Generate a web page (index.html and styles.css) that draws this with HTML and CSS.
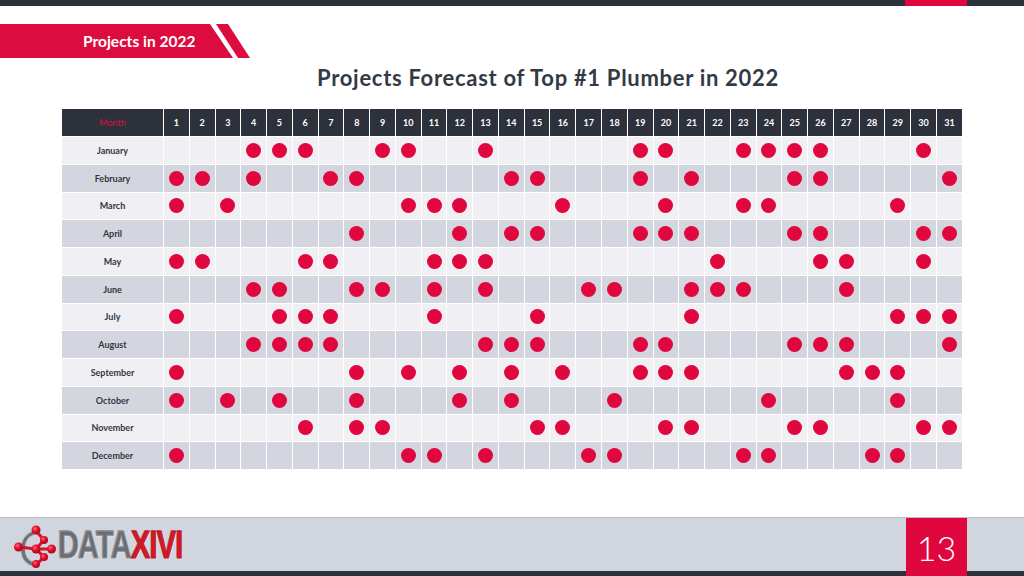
FILE: index.html
```html
<!DOCTYPE html>
<html lang="en">
<head>
<meta charset="utf-8">
<title>Projects in 2022</title>
<link rel="stylesheet" href="styles.css">
</head>
<body>
<div class="topbar"><div class="topbar-accent"></div></div>
<main class="main">
  <div class="banner">
    <div class="banner-main">Projects in 2022</div>
    <div class="banner-stripe"></div>
  </div>
  <h1 class="title">Projects Forecast of Top #1 Plumber in 2022</h1>
  <table class="grid">
    <thead>
      <tr><th class="month-h">Month</th><th>1</th><th>2</th><th>3</th><th>4</th><th>5</th><th>6</th><th>7</th><th>8</th><th>9</th><th>10</th><th>11</th><th>12</th><th>13</th><th>14</th><th>15</th><th>16</th><th>17</th><th>18</th><th>19</th><th>20</th><th>21</th><th>22</th><th>23</th><th>24</th><th>25</th><th>26</th><th>27</th><th>28</th><th>29</th><th>30</th><th>31</th></tr>
    </thead>
    <tbody>
      <tr><th>January</th><td></td><td></td><td></td><td class="d"></td><td class="d"></td><td class="d"></td><td></td><td></td><td class="d"></td><td class="d"></td><td></td><td></td><td class="d"></td><td></td><td></td><td></td><td></td><td></td><td class="d"></td><td class="d"></td><td></td><td></td><td class="d"></td><td class="d"></td><td class="d"></td><td class="d"></td><td></td><td></td><td></td><td class="d"></td><td></td></tr>
      <tr><th>February</th><td class="d"></td><td class="d"></td><td></td><td class="d"></td><td></td><td></td><td class="d"></td><td class="d"></td><td></td><td></td><td></td><td></td><td></td><td class="d"></td><td class="d"></td><td></td><td></td><td></td><td class="d"></td><td></td><td class="d"></td><td></td><td></td><td></td><td class="d"></td><td class="d"></td><td></td><td></td><td></td><td></td><td class="d"></td></tr>
      <tr><th>March</th><td class="d"></td><td></td><td class="d"></td><td></td><td></td><td></td><td></td><td></td><td></td><td class="d"></td><td class="d"></td><td class="d"></td><td></td><td></td><td></td><td class="d"></td><td></td><td></td><td></td><td class="d"></td><td></td><td></td><td class="d"></td><td class="d"></td><td></td><td></td><td></td><td></td><td class="d"></td><td></td><td></td></tr>
      <tr><th>April</th><td></td><td></td><td></td><td></td><td></td><td></td><td></td><td class="d"></td><td></td><td></td><td></td><td class="d"></td><td></td><td class="d"></td><td class="d"></td><td></td><td></td><td></td><td class="d"></td><td class="d"></td><td class="d"></td><td></td><td></td><td></td><td class="d"></td><td class="d"></td><td></td><td></td><td></td><td class="d"></td><td class="d"></td></tr>
      <tr><th>May</th><td class="d"></td><td class="d"></td><td></td><td></td><td></td><td class="d"></td><td class="d"></td><td></td><td></td><td></td><td class="d"></td><td class="d"></td><td class="d"></td><td></td><td></td><td></td><td></td><td></td><td></td><td></td><td></td><td class="d"></td><td></td><td></td><td></td><td class="d"></td><td class="d"></td><td></td><td></td><td class="d"></td><td></td></tr>
      <tr><th>June</th><td></td><td></td><td></td><td class="d"></td><td class="d"></td><td></td><td></td><td class="d"></td><td class="d"></td><td></td><td class="d"></td><td></td><td class="d"></td><td></td><td></td><td></td><td class="d"></td><td class="d"></td><td></td><td></td><td class="d"></td><td class="d"></td><td class="d"></td><td></td><td></td><td></td><td class="d"></td><td></td><td></td><td></td><td></td></tr>
      <tr><th>July</th><td class="d"></td><td></td><td></td><td></td><td class="d"></td><td class="d"></td><td class="d"></td><td></td><td></td><td></td><td class="d"></td><td></td><td></td><td></td><td class="d"></td><td></td><td></td><td></td><td></td><td></td><td class="d"></td><td></td><td></td><td></td><td></td><td></td><td></td><td></td><td class="d"></td><td class="d"></td><td class="d"></td></tr>
      <tr><th>August</th><td></td><td></td><td></td><td class="d"></td><td class="d"></td><td class="d"></td><td class="d"></td><td></td><td></td><td></td><td></td><td></td><td class="d"></td><td class="d"></td><td class="d"></td><td></td><td></td><td></td><td class="d"></td><td class="d"></td><td></td><td></td><td></td><td></td><td class="d"></td><td class="d"></td><td class="d"></td><td></td><td></td><td></td><td class="d"></td></tr>
      <tr><th>September</th><td class="d"></td><td></td><td></td><td></td><td></td><td></td><td></td><td class="d"></td><td></td><td class="d"></td><td></td><td class="d"></td><td></td><td class="d"></td><td></td><td class="d"></td><td></td><td></td><td class="d"></td><td class="d"></td><td class="d"></td><td></td><td></td><td></td><td></td><td></td><td class="d"></td><td class="d"></td><td class="d"></td><td></td><td></td></tr>
      <tr><th>October</th><td class="d"></td><td></td><td class="d"></td><td></td><td class="d"></td><td></td><td></td><td class="d"></td><td></td><td></td><td></td><td class="d"></td><td></td><td class="d"></td><td></td><td></td><td></td><td class="d"></td><td></td><td></td><td></td><td></td><td></td><td class="d"></td><td></td><td></td><td></td><td></td><td class="d"></td><td></td><td></td></tr>
      <tr><th>November</th><td></td><td></td><td></td><td></td><td></td><td class="d"></td><td></td><td class="d"></td><td class="d"></td><td></td><td></td><td></td><td></td><td></td><td class="d"></td><td class="d"></td><td></td><td></td><td></td><td class="d"></td><td class="d"></td><td></td><td></td><td></td><td class="d"></td><td class="d"></td><td></td><td></td><td></td><td class="d"></td><td class="d"></td></tr>
      <tr><th>December</th><td class="d"></td><td></td><td></td><td></td><td></td><td></td><td></td><td></td><td></td><td class="d"></td><td class="d"></td><td></td><td class="d"></td><td></td><td></td><td></td><td class="d"></td><td class="d"></td><td></td><td></td><td></td><td></td><td class="d"></td><td class="d"></td><td></td><td></td><td></td><td class="d"></td><td class="d"></td><td></td><td></td></tr>
    </tbody>
  </table>
</main>
<footer class="footer">
  <div class="logo">
    <svg class="logo-mark" width="44" height="46" viewBox="0 0 44 46" aria-hidden="true">
      <defs>
        <radialGradient id="ball" cx="0.38" cy="0.35" r="0.7">
          <stop offset="0" stop-color="#ff6a7a"/>
          <stop offset="0.45" stop-color="#e3102c"/>
          <stop offset="1" stop-color="#a3081c"/>
        </radialGradient>
      </defs>
      <path d="M21 11 Q11 15 11 27 Q11 39 21 42" fill="none" stroke="#c9ccd1" stroke-width="6" stroke-linecap="round"/>
      <path d="M21 11 Q11 15 11 27 Q11 39 21 42" fill="none" stroke="#6f7276" stroke-width="3.5" stroke-linecap="round"/>
      <g stroke="#d4142c" stroke-width="3" stroke-linecap="round" fill="none">
        <path d="M24 9 L32 18 L24 27 L32 35 L24 43"/>
        <path d="M7 25 L24 27 L40 27"/>
      </g>
      <g fill="url(#ball)">
        <circle cx="24" cy="8" r="4.5"/>
        <circle cx="32" cy="18" r="4"/>
        <circle cx="6.5" cy="25" r="4.5"/>
        <circle cx="24" cy="27" r="4.5"/>
        <circle cx="39.5" cy="27" r="4.5"/>
        <circle cx="32" cy="35" r="4"/>
        <circle cx="24" cy="42" r="4"/>
      </g>
    </svg>
    <div class="logo-text"><span class="logo-data">DATA</span><span class="logo-xivi">XIVI</span></div>
  </div>
  <div class="page-num">13</div>
</footer>
</body>
</html>
```
FILE: styles.css
```css
html, body {
  margin: 0;
  padding: 0;
}

body {
  width: 1024px;
  height: 576px;
  overflow: hidden;
  display: flex;
  flex-direction: column;
  background: #ffffff;
  font-family: Lato, "Open Sans", "Liberation Sans", sans-serif;
}

.topbar {
  height: 6px;
  flex: none;
  background: #2c313c;
  display: flex;
  justify-content: flex-end;
}

.topbar-accent {
  width: 62px;
  margin-right: 57px;
  background: #e0073f;
}

.main {
  flex: 1;
  display: flex;
  flex-direction: column;
}

.banner {
  display: flex;
  height: 34px;
  margin-top: 18px;
}

.banner-main {
  width: 233px;
  box-sizing: border-box;
  padding-left: 83px;
  display: flex;
  align-items: center;
  background: #dd0c3f;
  clip-path: polygon(0 0, 210px 0, 233px 100%, 0 100%);
  color: #ffffff;
  font-weight: 700;
  font-size: 15.5px;
}

.banner-stripe {
  width: 34px;
  margin-left: -17px;
  background: #dd0c3f;
  clip-path: polygon(0 0, 12px 0, 34px 100%, 22px 100%);
}

.title {
  margin: 6px 0 0;
  padding-left: 72px;
  text-align: center;
  font-size: 22px;
  letter-spacing: 0.7px;
  line-height: 28px;
  font-weight: 700;
  color: #333a45;
}

.grid {
  margin: 16px 0 0 61px;
  width: 902px;
  table-layout: fixed;
  border-collapse: separate;
  border-spacing: 1px;
}

.grid th,
.grid td {
  padding: 0;
  font-size: 9px;
  font-weight: 700;
  text-align: center;
  vertical-align: middle;
}

.grid thead th {
  height: 27px;
  background: #2c313c;
  color: #ffffff;
}

.grid thead th.month-h {
  width: 101px;
  color: #d7133f;
  font-weight: 400;
}

.grid tbody th,
.grid tbody td {
  height: 26.75px;
}

.grid tbody th {
  color: #333840;
}

.grid tbody tr:nth-child(odd) > * {
  background: #f0eff4;
}

.grid tbody tr:nth-child(even) > * {
  background: #d3d6de;
}

.grid td.d::after {
  content: "";
  display: block;
  width: 15px;
  height: 15px;
  margin: 0 auto;
  border-radius: 50%;
  background: #e0073f;
}

.footer {
  flex: none;
  height: 53px;
  border-top: 1px solid #b8bbc1;
  border-bottom: 5px solid #2c313c;
  background: #d1d5dd;
  display: flex;
  align-items: center;
}

.logo {
  margin-left: 12px;
  display: flex;
  align-items: center;
}

.logo-mark {
  display: block;
}

.logo-text {
  margin-left: 2px;
  width: 126px;
  font-family: "Liberation Sans", Arial, sans-serif;
  font-weight: 700;
  font-size: 38px;
  line-height: 38px;
  letter-spacing: -1px;
  white-space: nowrap;
  transform: scaleX(0.76);
  transform-origin: left center;
}

.logo-data {
  color: #6a6d72;
  -webkit-text-stroke: 1px #8c8f94;
  text-shadow: 1px 1px 0 #f2f3f5, -1px -1px 0 #9da0a5;
}

.logo-xivi {
  color: #d11a2a;
  -webkit-text-stroke: 1px #b3121f;
  text-shadow: 1px 1px 0 #f2f3f5, -1px -1px 0 #e77a84;
}

.page-num {
  margin-left: auto;
  margin-right: 57px;
  margin-bottom: -5px;
  align-self: stretch;
  width: 61px;
  display: flex;
  align-items: center;
  justify-content: center;
  background: #e0073f;
  color: #ffffff;
  font-weight: 300;
  font-size: 34px;
}
```
